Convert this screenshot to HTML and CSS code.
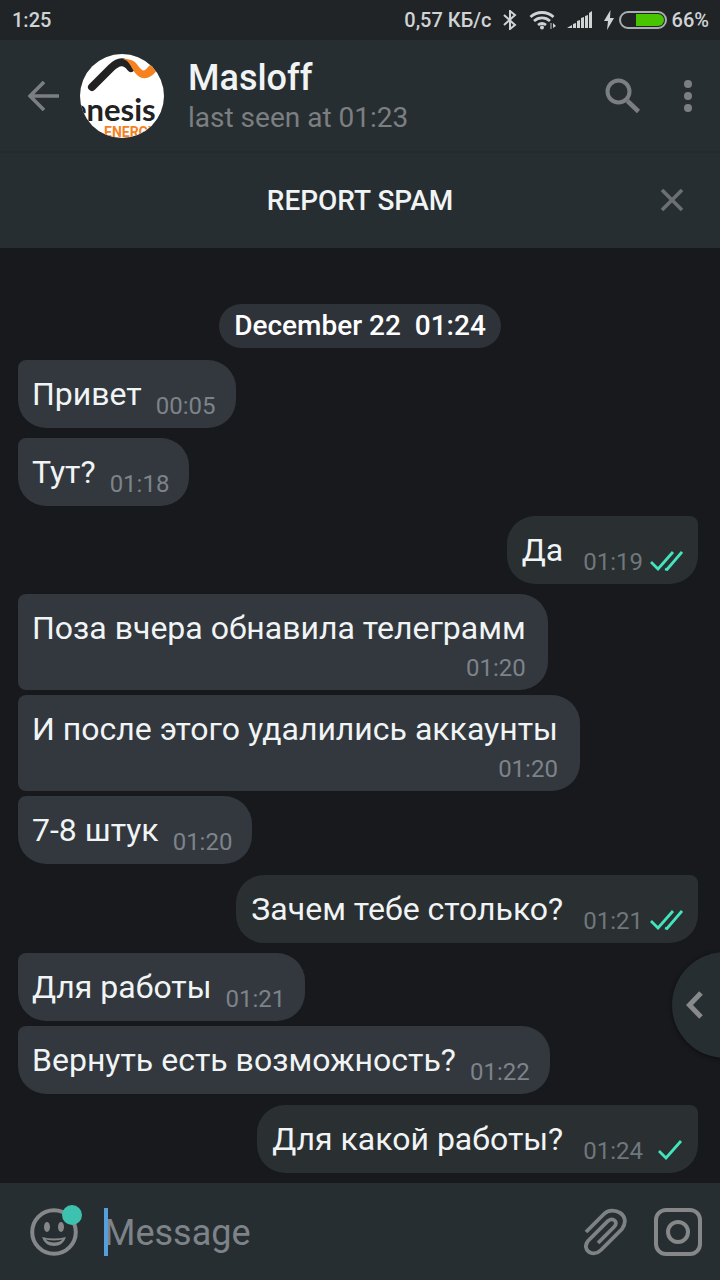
FILE: index.html
```html
<!DOCTYPE html>
<html lang="en">
<head>
<meta charset="utf-8">
<meta name="viewport" content="width=device-width, initial-scale=1">
<title>Masloff</title>
<link rel="stylesheet" href="styles.css">
</head>
<body>
<div class="status-bar">
  <span class="clock">1:25</span>
  <div class="status-right">
    <span class="speed">0,57 КБ/с</span>
    <svg class="bluetooth" width="14" height="20" viewBox="0 0 14 20"><path d="M1 5l11 10-5 4V1l5 4L1 15" fill="none" stroke="#d0d3d4" stroke-width="2"/></svg>
    <svg class="wifi" width="28" height="20" viewBox="0 0 28 20"><g fill="none" stroke="#d0d3d4" stroke-width="2.8"><path d="M1.500 7a17 17 0 0 1 23 0"/><path d="M5 11a12 12 0 0 1 16 0"/><path d="M9 15a6.500 6.500 0 0 1 8 0"/></g><circle cx="13" cy="17.500" r="2" fill="#d0d3d4"/><path d="M22 13v6" stroke="#8c9193" stroke-width="1.500"/><path d="M24 13l3 3-3 2z" fill="#d0d3d4"/></svg>
    <svg class="signal" width="26" height="18" viewBox="0 0 26 18"><path d="M0 17l5-3v3zM6 13l3-1v5H6zM10 10l3-1v8h-3zM14 7l3-1v11h-3zM18 5l3-1v13h-3zM22 2l3-2v17h-3z" fill="#d0d3d4"/></svg>
    <svg class="bolt" width="12" height="20" viewBox="0 0 12 20"><path d="M7.500 0L1 11h4l-1 9 7-12H7z" fill="#d0d3d4"/></svg>
    <svg class="battery" width="48" height="18" viewBox="0 0 48 18"><rect x="1" y="1" width="46" height="16" rx="8" fill="none" stroke="#a9aeb1" stroke-width="2"/><path d="M17 3h22a6 6 0 0 1 0 12H17z" fill="#48c400"/></svg>
    <span class="percent">66%</span>
  </div>
</div>

<header class="header">
  <button class="icon-button back" aria-label="Back"><svg width="32" height="30" viewBox="0 0 32 30"><path d="M31 15H2M16 1L2 15l14 14" fill="none" stroke="#7c7f81" stroke-width="3.600"/></svg></button>
  <svg class="avatar" width="84" height="84" viewBox="0 0 84 84" role="img" aria-label="Masloff">
    <rect width="84" height="84" fill="#fff"/>
    <path d="M12 33L31 14q8-8 14-5 3 1 6 5" fill="none" stroke="#222" stroke-width="8" stroke-linecap="round"/>
    <path d="M43 5c9 0 12 2 16 8 4 5 6 4 9 0l3-3 6 6c-6 9-15 11-21 4-5-6-6-13-13-15z" fill="#f5821f"/>
    <text x="-10" y="67" class="logo-name">enesis</text>
    <text x="24" y="83" class="logo-sub">ENERGY</text>
  </svg>
  <div class="contact">
    <h1 class="contact-name">Masloff</h1>
    <p class="contact-status">last seen at 01:23</p>
  </div>
  <button class="icon-button search" aria-label="Search"><svg width="36" height="36" viewBox="0 0 36 36"><circle cx="13.500" cy="13.500" r="11" fill="none" stroke="#7c7f81" stroke-width="4"/><path d="M22.500 23L33.500 33.500" stroke="#7c7f81" stroke-width="4.500"/></svg></button>
  <button class="icon-button more" aria-label="More options"><svg width="8" height="32" viewBox="0 0 8 32"><g fill="#7c7f81"><circle cx="4" cy="4" r="4"/><circle cx="4" cy="16" r="4"/><circle cx="4" cy="28" r="4"/></g></svg></button>
</header>

<div class="report-bar">
  <button class="report">REPORT SPAM</button>
  <button class="icon-button close" aria-label="Close"><svg width="24" height="24" viewBox="0 0 24 24"><path d="M2 1l20 20M22 1L2 21" stroke="#6c7072" stroke-width="3.600"/></svg></button>
</div>

<main class="chat">
  <div class="date">December 22&nbsp; 01:24</div>
  <div class="message incoming spaced"><p class="text">Привет</p><time class="time">00:05</time></div>
  <div class="message incoming spaced"><p class="text">Тут?</p><time class="time">01:18</time></div>
  <div class="message outgoing spaced"><p class="text">Да</p><time class="time">01:19</time><svg class="check" width="33" height="20" viewBox="0 0 33 20"><path d="M1 11l7 7L23 1M15 18l2 .500L32 1" fill="none" stroke="#43e5bd" stroke-width="2.800"/></svg></div>
  <div class="message incoming tall spaced"><p class="text">Поза вчера обнавила телеграмм</p><time class="time">01:20</time></div>
  <div class="message incoming tall"><p class="text">И после этого удалились аккаунты</p><time class="time">01:20</time></div>
  <div class="message incoming"><p class="text">7-8 штук</p><time class="time">01:20</time></div>
  <div class="message outgoing spaced"><p class="text">Зачем тебе столько?</p><time class="time">01:21</time><svg class="check" width="33" height="20" viewBox="0 0 33 20"><path d="M1 11l7 7L23 1M15 18l2 .500L32 1" fill="none" stroke="#43e5bd" stroke-width="2.800"/></svg></div>
  <div class="message incoming spaced"><p class="text">Для работы</p><time class="time">01:21</time></div>
  <div class="message incoming"><p class="text">Вернуть есть возможность?</p><time class="time">01:22</time></div>
  <div class="message outgoing spaced"><p class="text">Для какой работы?</p><time class="time">01:24</time><svg class="check" width="33" height="20" viewBox="0 0 33 20"><path d="M9 11l7 7L31 1" fill="none" stroke="#43e5bd" stroke-width="2.800"/></svg></div>
  <button class="side-button" aria-label="Open panel"><svg width="18" height="28" viewBox="0 0 18 28"><path d="M15 2L3.500 14 15 26" fill="none" stroke="#87898a" stroke-width="5"/></svg></button>
</main>

<footer class="composer">
  <button class="icon-button emoji" aria-label="Emoji">
    <svg width="48" height="48" viewBox="0 0 48 48"><circle cx="24" cy="24" r="21.800" fill="none" stroke="#858788" stroke-width="4"/><ellipse cx="17" cy="19" rx="3" ry="5" fill="#858788"/><ellipse cx="31" cy="19" rx="3" ry="5" fill="#858788"/><path d="M12 29q12 3 24 0-3 9-12 9t-12-9z" fill="#858788"/><path d="M15.500 31.500q8.500 2 17 0-3 3-8.500 3t-8.500-3z" fill="#272e31"/></svg>
    <span class="badge"></span>
  </button>
  <div class="field">
    <input class="message-input" type="text" placeholder="Message" aria-label="Message">
    <span class="caret"></span>
  </div>
  <button class="icon-button attach" aria-label="Attach file"><svg width="44" height="50" viewBox="0 0 44 50"><path d="M2 25L20 7C29-2 48 8 38 22L17 43C9 51-3 43 4 34L24 14C29 10 35 15 30 20L14 36" fill="none" stroke="#7f8283" stroke-width="3.800"/></svg></button>
  <button class="icon-button camera" aria-label="Camera"><svg width="48" height="48" viewBox="0 0 48 48"><rect x="2" y="2" width="44" height="44" rx="10" fill="none" stroke="#858788" stroke-width="4"/><circle cx="24" cy="24" r="10" fill="none" stroke="#858788" stroke-width="4"/></svg></button>
</footer>
</body>
</html>
```

FILE: styles.css
```css
* {
  box-sizing: border-box;
}

body {
  margin: 0;
  min-height: 100vh;
  display: flex;
  flex-direction: column;
  background: #18191d;
  color: #f1f4f5;
  font-family: Roboto, "Noto Sans", sans-serif;
}

h1,
p {
  margin: 0;
}

svg {
  display: block;
  flex: none;
}

button {
  border: 0;
  padding: 0;
  background: none;
  color: inherit;
  font: inherit;
}

.icon-button {
  position: relative;
  flex: none;
}

.status-bar {
  height: 40px;
  padding: 0 11px 0 12px;
  display: flex;
  align-items: center;
  justify-content: space-between;
  background: #202427;
  color: #d0d3d4;
  font-size: 20px;
  font-weight: 500;
}

.status-right {
  display: flex;
  align-items: center;
}

.bluetooth {
  margin-left: 11px;
}

.wifi {
  margin-left: 12px;
}

.signal {
  margin-left: 10px;
}

.bolt {
  margin-left: 10px;
}

.battery {
  margin-left: 4px;
}

.percent {
  margin-left: 5px;
}

.header {
  height: 113px;
  padding: 0 28px;
  display: flex;
  align-items: center;
  background: #272e31;
  border-bottom: 2px solid #23292c;
}

.avatar {
  margin-left: 20px;
  border-radius: 50%;
}

.logo-name {
  font: 700 31px Lato, sans-serif;
  fill: #222;
}

.logo-sub {
  font: 700 14px Roboto, sans-serif;
  fill: #f5821f;
}

.contact {
  flex: 1;
  margin-left: 24px;
  padding-top: 3px;
}

.contact-name {
  font-size: 36px;
  font-weight: 500;
  line-height: 42px;
}

.contact-status {
  color: #7c7f81;
  font-size: 28px;
  line-height: 38px;
}

.more {
  margin-left: 43px;
}

.report-bar {
  height: 95px;
  padding: 0 36px;
  display: grid;
  grid-template-columns: 24px 1fr 24px;
  align-items: center;
  background: #272e31;
}

.report {
  grid-column: 2;
  font-size: 28px;
  font-weight: 500;
}

.chat {
  position: relative;
  flex: 1;
  padding: 20px 22px 10px 18px;
  display: flex;
  flex-direction: column;
  justify-content: flex-end;
  gap: 5px;
  overflow: hidden;
}

.date {
  align-self: center;
  margin-left: 4px;
  margin-bottom: 2px;
  padding: 0 15px;
  border-radius: 22px;
  background: #2e3239;
  color: #fff;
  font-size: 28px;
  font-weight: 500;
  line-height: 44px;
}

.message {
  min-height: 68px;
  padding: 14px 20px 8px 14px;
  display: flex;
  align-items: flex-end;
  column-gap: 14px;
  line-height: 40px;
}

.spaced {
  margin-top: 5px;
}

.incoming:not(.spaced) + .outgoing {
  margin-top: 6px;
}

.text {
  align-self: flex-start;
  font-size: 32px;
}

.time {
  color: #7d8389;
  font-size: 24px;
  line-height: 28px;
}

.incoming {
  align-self: flex-start;
  border-radius: 8px 28px 28px 28px;
  background: #32383e;
}

.tall {
  flex-direction: column;
  row-gap: 6px;
  padding-right: 22px;
  border-bottom-left-radius: 8px;
}

.outgoing {
  align-self: flex-end;
  padding: 14px 15px 8px;
  column-gap: 20px;
  border-radius: 28px 8px 28px 28px;
  background: #2a2f32;
}

.outgoing .time {
  color: #70777b;
}

.check {
  margin-left: -13px;
  margin-bottom: 5px;
}

.side-button {
  position: absolute;
  right: -58px;
  bottom: 125px;
  width: 106px;
  height: 106px;
  padding-left: 14px;
  border-radius: 50%;
  background: #272e31;
  box-shadow: 0 1px 4px #0c0d0f;
}

.composer {
  height: 97px;
  padding: 0 18px 0 30px;
  display: flex;
  align-items: center;
  background: #272e31;
}

.badge {
  position: absolute;
  top: -3px;
  right: -4px;
  width: 20px;
  height: 20px;
  border-radius: 50%;
  background: #3ec2b0;
}

.field {
  position: relative;
  flex: 1;
  min-width: 0;
  margin-left: 26px;
}

.message-input {
  width: 100%;
  height: 48px;
  padding: 3px 0 0;
  border: 0;
  outline: 0;
  background: none;
  color: #f1f4f5;
  font: 36px Roboto, "Noto Sans", sans-serif;
}

.message-input::placeholder {
  color: #7d8389;
  opacity: 1;
}

.caret {
  position: absolute;
  left: 0;
  top: 0;
  width: 4px;
  height: 48px;
  background: #559fdc;
}

.camera {
  margin-left: 26px;
}
```
